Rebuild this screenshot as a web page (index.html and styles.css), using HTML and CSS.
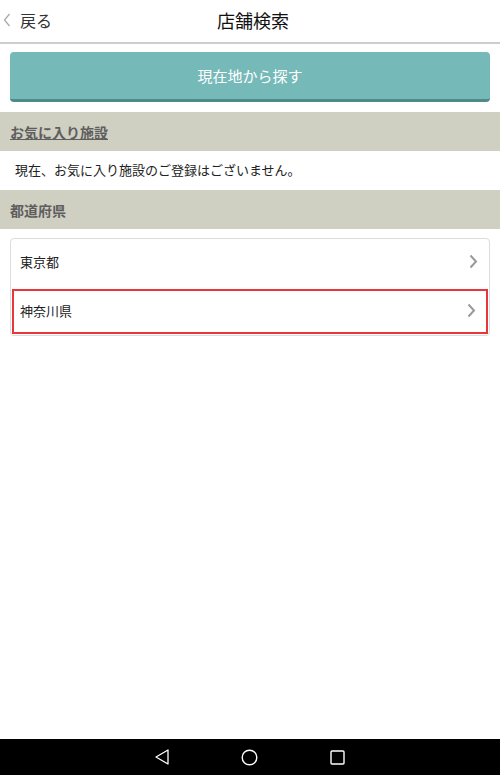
FILE: index.html
```html
<!DOCTYPE html>
<html lang="ja">
<head>
    <meta charset="UTF-8">
    <title>店舗検索</title>
    <link rel="stylesheet" href="styles.css">
</head>
<body>
<div id="screen">
    <div id="header">
        <a class="back" href="#">
            <svg class="back-icon" width="8" height="14" viewBox="0 0 8 14"><path d="M6.5 1 L1.5 7 L6.5 13" fill="none" stroke="#aaa" stroke-width="1.3"/></svg>
            戻る
        </a>
        <h1 class="title">店舗検索</h1>
    </div>
    <div id="main">
        <button class="locate">現在地から探す</button>
        <div class="bar"><a href="#">お気に入り施設</a></div>
        <p class="info">現在、お気に入り施設のご登録はございません。</p>
        <div class="bar">都道府県</div>
        <ul class="pref-list">
            <li><span>東京都</span>
                <svg class="arrow" width="9" height="15" viewBox="0 0 9 15"><path d="M1.5 1.5 L7 7.5 L1.5 13.5" fill="none" stroke="#999" stroke-width="2"/></svg>
            </li>
            <li class="focused"><span>神奈川県</span>
                <svg class="arrow" width="9" height="15" viewBox="0 0 9 15"><path d="M1.5 1.5 L7 7.5 L1.5 13.5" fill="none" stroke="#999" stroke-width="2"/></svg>
            </li>
        </ul>
    </div>
    <div id="navbar">
        <svg width="14" height="16" viewBox="0 0 14 16"><path d="M13 1 L1 8 L13 15 Z" fill="none" stroke="#fff" stroke-width="1.3" stroke-linejoin="round"/></svg>
        <svg width="17" height="17" viewBox="0 0 17 17"><circle cx="8.5" cy="8.5" r="7.3" fill="none" stroke="#fff" stroke-width="1.4"/></svg>
        <svg width="15" height="15" viewBox="0 0 15 15"><rect x="1" y="1" width="13" height="13" rx="1" fill="none" stroke="#fff" stroke-width="1.4"/></svg>
    </div>
</div>
</body>
</html>
```

FILE: styles.css
```css
* {
    box-sizing: border-box;
}

body {
    margin: 0;
    font-family: "Noto Sans CJK JP", "Noto Sans", sans-serif;
    color: #222;
    background: #fff;
}

#screen {
    width: 500px;
    height: 775px;
    display: flex;
    flex-direction: column;
}

#header {
    height: 44px;
    border-bottom: 2px solid #cdcdcd;
    display: flex;
    align-items: center;
    justify-content: center;
    position: relative;
}

.back {
    position: absolute;
    left: 3px;
    top: 8px;
    display: flex;
    align-items: center;
    gap: 9px;
    font-size: 16px;
    color: #333;
    text-decoration: none;
}

.title {
    margin: 0 0 0 6px;
    font-size: 18px;
    font-weight: normal;
    color: #111;
    line-height: 1;
    padding-bottom: 3px;
}

#main {
    flex: 1;
    display: flex;
    flex-direction: column;
}

.locate {
    margin: 8px 10px 10px;
    height: 50px;
    border: none;
    border-radius: 4px;
    background: #76b9b9;
    border-bottom: 3px solid #4d8a89;
    color: #fff;
    font-family: inherit;
    font-size: 15px;
    padding: 0;
}

.bar {
    background: #cfcfc2;
    height: 39px;
    padding-left: 10px;
    display: flex;
    align-items: center;
    font-size: 14px;
    font-weight: bold;
    color: #5e5e5e;
}

.bar a {
    color: #5e5e5e;
    text-decoration: underline;
}

.info {
    margin: 0;
    height: 39px;
    padding: 0 0 3px 15px;
    display: flex;
    align-items: center;
    font-size: 13px;
    color: #222;
}

.pref-list {
    list-style: none;
    margin: 9px 10px 0;
    padding: 0;
    border: 1px solid #ddd;
    border-radius: 4px;
}

.pref-list li {
    height: 48px;
    display: flex;
    align-items: center;
    justify-content: space-between;
    padding: 0 11px 3px 9px;
    font-size: 13px;
    color: #222;
}

.pref-list li + li {
    border-top: 1px solid #ddd;
}

.pref-list li.focused {
    margin: 2px 1px 1px;
    height: 45px;
    padding: 0 10px 3px 6px;
    border: 2px solid #e8363a;
}

#navbar {
    height: 36px;
    background: #000;
    display: flex;
    align-items: center;
    justify-content: center;
    gap: 72px;
}
```
